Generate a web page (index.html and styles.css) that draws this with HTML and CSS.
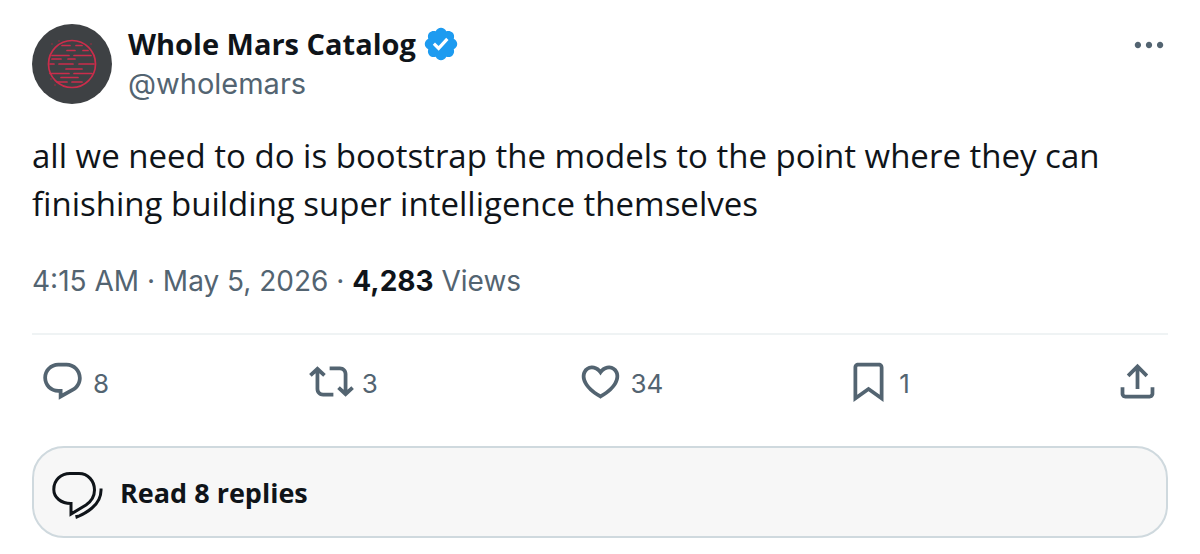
FILE: index.html
```
<!DOCTYPE html>
<html lang="en">
<head>
<meta charset="utf-8">
<meta name="viewport" content="width=device-width, initial-scale=1">
<title>Whole Mars Catalog</title>
<link rel="stylesheet" href="styles.css">
</head>
<body>
<article class="post">
  <header class="head">
    <svg class="avatar" viewBox="0 0 80 80" role="img" aria-label="Whole Mars Catalog avatar">
      <circle cx="40" cy="40" r="40" fill="#3e4144"/>
      <g fill="none" stroke="#cb2d4b" stroke-width="1.7" stroke-linecap="round">
        <circle cx="40" cy="40" r="23.5"/>
        <path d="M30 21.500H38M44 21.500H50M35 26.500H43M51 26.500H56M20 31.500H37M42 31.500H59M20 35H29M36 35H43M18 40H22M27 40H41M47 40H62M34 45H50M18 49.500H37M42 49.500H60M29 53.500H46M25 58H35M40 58H50"/>
      </g>
      <g fill="#7d3340"><circle cx="20" cy="20" r="1"/><circle cx="59" cy="20" r="1"/><circle cx="19" cy="55" r="1"/><circle cx="23" cy="61" r="1"/><circle cx="27" cy="17" r="1"/></g>
    </svg>
    <div class="author">
      <div class="name-row">
        <a class="name" href="#">Whole Mars Catalog</a>
        <svg class="verified" viewBox="0 0 24 24" role="img" aria-label="Verified account"><path d="M22.250 12c0-1.430-.88-2.670-2.190-3.340.46-1.390.2-2.900-.81-3.910s-2.520-1.270-3.910-.81c-.66-1.310-1.910-2.190-3.340-2.190s-2.670.88-3.330 2.190c-1.400-.46-2.910-.2-3.920.81s-1.260 2.520-.8 3.910c-1.310.67-2.200 1.910-2.200 3.340s.89 2.670 2.200 3.340c-.46 1.390-.21 2.900.8 3.910s2.520 1.260 3.910.81c.67 1.310 1.910 2.190 3.340 2.190s2.680-.88 3.340-2.190c1.390.45 2.900.2 3.910-.81s1.270-2.520.81-3.910c1.310-.67 2.190-1.910 2.190-3.340zm-11.710 4.200L6.800 12.460l1.410-1.420 2.260 2.260 4.800-5.230 1.470 1.360-6.200 6.770z"/></svg>
      </div>
      <a class="handle" href="#">@wholemars</a>
    </div>
    <button class="more" type="button" aria-label="More">
      <svg viewBox="0 0 24 24"><path d="M3 12c0-1.100.9-2 2-2s2 .9 2 2-.9 2-2 2-2-.9-2-2zm9 2c1.100 0 2-.9 2-2s-.9-2-2-2-2 .9-2 2 .9 2 2 2zm7 0c1.100 0 2-.9 2-2s-.9-2-2-2-2 .9-2 2 .9 2 2 2z"/></svg>
    </button>
  </header>
  <p class="text">all we need to do is bootstrap the models to the point where they can finishing building super intelligence themselves</p>
  <p class="meta"><time datetime="2026-05-05T04:15">4:15 AM · May 5, 2026</time> · <strong>4,283</strong> Views</p>
  <div class="actions">
    <button class="action" type="button" aria-label="8 replies"><svg viewBox="0 0 24 24"><path d="M1.751 10c0-4.420 3.584-8 8.005-8h4.366c4.490 0 8.129 3.640 8.129 8.130 0 2.960-1.607 5.680-4.196 7.110l-8.054 4.460v-3.690h-.067c-4.490.1-8.183-3.510-8.183-8.010zm8.005-6c-3.317 0-6.005 2.690-6.005 6 0 3.370 2.770 6.080 6.138 6.010l.351-.01h1.761v2.300l5.087-2.810c1.951-1.080 3.163-3.130 3.163-5.360 0-3.390-2.744-6.130-6.129-6.130H9.756z"/></svg><span>8</span></button>
    <button class="action" type="button" aria-label="3 reposts"><svg viewBox="0 0 24 24"><path d="M4.500 3.880l4.432 4.140-1.364 1.460L5.500 7.550V16c0 1.100.896 2 2 2H13v2H7.500c-2.209 0-4-1.790-4-4V7.550L1.432 9.480.068 8.020 4.500 3.880zM16.500 6H11V4h5.500c2.209 0 4 1.790 4 4v8.450l2.068-1.930 1.364 1.460-4.432 4.140-4.432-4.140 1.364-1.460 2.068 1.930V8c0-1.100-.896-2-2-2z"/></svg><span>3</span></button>
    <button class="action" type="button" aria-label="34 likes"><svg viewBox="0 0 24 24"><path d="M16.697 5.500c-1.222-.06-2.679.51-3.890 2.160l-.805 1.090-.806-1.090C9.984 6.010 8.526 5.440 7.304 5.500c-1.243.07-2.349.78-2.910 1.910-.552 1.120-.633 2.780.479 4.820 1.074 1.970 3.257 4.270 7.129 6.610 3.870-2.340 6.052-4.640 7.126-6.610 1.111-2.040 1.030-3.700.477-4.820-.561-1.130-1.666-1.840-2.908-1.910zm4.187 7.690c-1.351 2.480-4.001 5.120-8.379 7.670l-.503.3-.504-.3c-4.379-2.550-7.029-5.190-8.382-7.670-1.360-2.500-1.410-4.860-.514-6.670.887-1.790 2.647-2.910 4.601-3.010 1.651-.09 3.368.56 4.798 2.010 1.429-1.450 3.146-2.100 4.796-2.010 1.954.1 3.714 1.220 4.601 3.010.896 1.810.846 4.170-.514 6.670z"/></svg><span>34</span></button>
    <button class="action" type="button" aria-label="1 bookmark"><svg viewBox="0 0 24 24"><path d="M4 4.500C4 3.120 5.119 2 6.500 2h11C18.881 2 20 3.120 20 4.500v18.440l-8-5.710-8 5.710V4.500zM6.500 4c-.276 0-.5.22-.5.5v14.560l6-4.290 6 4.290V4.500c0-.28-.224-.5-.5-.5h-11z"/></svg><span>1</span></button>
    <button class="action" type="button" aria-label="Share"><svg viewBox="0 0 24 24"><path d="M12 2.590l5.700 5.700-1.410 1.420L13 6.410V16h-2V6.410l-3.300 3.300-1.410-1.420L12 2.590zM21 15l-.02 3.510c0 1.380-1.120 2.490-2.500 2.490H5.500C4.110 21 3 19.880 3 18.500V15h2v3.500c0 .28.22.5.5.5h12.980c.28 0 .5-.22.5-.5L19 15h2z"/></svg></button>
  </div>
  <a class="replies" href="#">
    <svg viewBox="0 0 56 56"><path d="M22 9.500H31C40 9.500 46.500 17 46.500 26C46.500 33 43 37.500 38 41L23 50V39.500C13 39.500 5.800 33.500 5.800 25.500C5.800 16 13 9.500 22 9.500Z"/><path d="M53 24.500C53.500 33 50 39 44 44C40 47.500 34.500 50.500 29 53L28.500 51"/></svg>
    <span>Read 8 replies</span>
  </a>
</article>
</body>
</html>
```
FILE: styles.css
```
* { box-sizing: border-box; }
body {
  margin: 0;
  background: #fff;
  color: #0f1419;
  font-family: "Open Sans", "Noto Sans", sans-serif;
}
a { color: inherit; text-decoration: none; }
button {
  border: 0;
  padding: 0;
  background: none;
  color: inherit;
  font: inherit;
  cursor: pointer;
}
svg { display: block; flex: none; fill: currentColor; }
.post { padding: 24px 32px 16px; }
.head { display: flex; align-items: flex-start; }
.avatar { width: 80px; height: 80px; }
.author { flex: 1; min-width: 0; margin-left: 16px; line-height: 40px; }
.name-row { display: flex; align-items: center; gap: 6px; }
.name { font-size: 29px; font-weight: 700; }
.verified { width: 38px; height: 38px; color: #1d9bf0; }
.handle {
  display: block;
  color: #536471;
  font-family: Inter, sans-serif;
  font-size: 29px;
}
.more { color: #536471; }
.more svg { width: 38px; height: 42px; }
.text { margin: 28px 0 0; font-size: 33px; line-height: 48px; }
.meta {
  margin: 33px 0 0;
  padding-bottom: 32px;
  border-bottom: 2px solid #eff3f4;
  color: #536471;
  font-family: Inter, sans-serif;
  font-size: 28px;
  line-height: 40px;
}
.meta strong { color: #0f1419; }
.actions {
  display: grid;
  grid-template-columns: repeat(4, 1fr) auto;
  padding: 24px 8px 42px;
}
.action {
  display: flex;
  align-items: center;
  gap: 8px;
  color: #536471;
  font-family: Inter, sans-serif;
  font-size: 26px;
  line-height: 41px;
}
.action span { padding-top: 4px; }
.action svg { width: 45px; height: 45px; }
.replies {
  display: flex;
  align-items: center;
  gap: 16px;
  height: 92px;
  padding: 0 14px;
  border: 2px solid #cfd9de;
  border-radius: 32px;
  background: #f7f7f7;
  font-size: 27px;
  font-weight: 700;
}
.replies svg {
  width: 56px;
  height: 56px;
  fill: none;
  stroke: currentColor;
  stroke-width: 3;
}
```
